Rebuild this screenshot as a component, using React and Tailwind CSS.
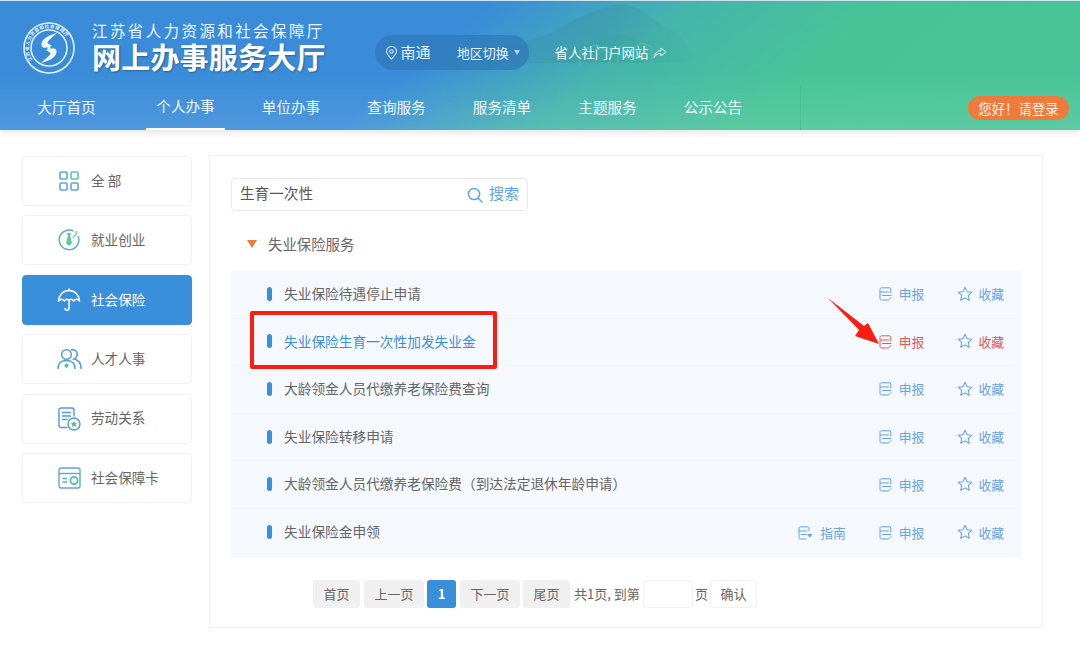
import React from "react";

const FONT = "font-['Noto_Sans_CJK_SC','Liberation_Sans',sans-serif]";

function Logo() {
  return (
    <svg width="52" height="52" viewBox="0 0 52 52" fill="none" className="ml-px shrink-0">
      <circle cx="26" cy="26" r="25" stroke="#dff0fa" strokeWidth="1.6" />
      <circle cx="26" cy="26" r="18" stroke="#dff0fa" strokeWidth="1.6" />
      <defs>
        <path id="ring" d="M9.5 38 A20.3 20.3 0 1 1 42.5 38" />
      </defs>
      <text fontSize="4.4" fill="#e6f3fb" fontWeight="700" letterSpacing="0.6" fontFamily="Noto Sans CJK SC, sans-serif">
        <textPath href="#ring">江苏省人力资源和社会保障厅</textPath>
      </text>
      <path d="M34 11 C27 13 18 16 18.5 23 C19 27 24 26 29 24 L24.5 21 C24 19 30 15 34 11Z" fill="#eef7fc" />
      <path d="M18 41 C25 39 34 36 33.5 29 C33 25 28 26 23 28 L27.5 31 C28 33 22 37 18 41Z" fill="#eef7fc" />
      <circle cx="26" cy="26" r="1.6" fill="#eef7fc" />
    </svg>
  );
}

function Mountains() {
  return (
    <svg className="absolute left-[430px] top-0 h-[70px] w-[270px] opacity-25 [mask-image:linear-gradient(90deg,transparent_0%,black_35%,black_70%,transparent_100%)]" viewBox="0 0 270 70" fill="none">
      <path d="M0 62 C40 44 90 48 125 30 C145 18 175 3 195 3 C212 5 222 22 245 30 C255 40 262 50 270 62Z" fill="#3a8a9e" />
      <path d="M110 62 C140 42 165 44 190 32 C215 40 240 52 260 62Z" fill="#2f8a8a" />
      <path d="M150 64 V50 L166 44 L180 52 V64 M188 62 V46 H204 L212 42 L222 46 V62" stroke="#8fd0c4" strokeWidth="1.2" />
    </svg>
  );
}

const GridIcon = () => (
  <svg width="20" height="20" viewBox="0 0 20 20" fill="none" strokeWidth="1.6">
    <rect x="1" y="1" width="7" height="7" rx="1" stroke="#5da5e3" />
    <rect x="12" y="1" width="7" height="7" rx="1" stroke="#5cc9a2" />
    <rect x="1" y="12" width="7" height="7" rx="1" stroke="#5da5e3" />
    <rect x="12" y="12" width="7" height="7" rx="1" stroke="#5da5e3" />
  </svg>
);

const JobIcon = () => (
  <svg width="22" height="22" viewBox="0 0 22 22" fill="none">
    <path d="M15.5 2.2 A9.8 9.8 0 1 0 20 7" stroke="#5da5e3" strokeWidth="1.4" />
    <path d="M9 4 H13 L12.2 7 L14 14 L11 17 L8 14 L9.8 7Z" fill="#5cc9a2" />
    <path d="M15 9 L19 4 M17 3 L20 3" stroke="#5cc9a2" strokeWidth="1.2" />
  </svg>
);

const UmbrellaIcon = () => (
  <svg width="24" height="24" viewBox="0 0 24 24" fill="none" stroke="#ffffff" strokeWidth="1.5" strokeLinecap="round" strokeLinejoin="round">
    <path d="M1.5 13 C2 7 6 2.5 12 2.5 C18 2.5 22 7 22.5 13 C20.5 10.6 18.5 10.6 16.7 13 C15 10.6 13.5 10.6 12 12.5 C10.5 10.6 9 10.6 7.3 13 C5.5 10.6 3.5 10.6 1.5 13Z" />
    <path d="M12 12.5 V20 C12 23 8.5 23 8 20.5" />
    <path d="M12 1 V2.5" />
  </svg>
);

const PeopleIcon = () => (
  <svg width="25" height="22" viewBox="0 0 25 22" fill="none" stroke="#4d9de0" strokeWidth="1.5" strokeLinecap="round">
    <circle cx="9.5" cy="6.5" r="4.8" />
    <path d="M1 20.5 C1 15 5 12.5 9.5 12.5 C14 12.5 18 15 18 20.5" />
    <path d="M14.5 2 C18 1 20.5 3.5 20.3 6.3 C20.2 8.3 19 10 17 11 C21 11.8 24 15 24 20.5" />
    <path d="M9.5 15 L11.8 17.6 L9.5 20.5 L7.2 17.6Z" fill="#49c497" stroke="none" />
  </svg>
);

const LaborIcon = () => (
  <svg width="23" height="24" viewBox="0 0 23 24" fill="none" stroke="#4d9de0" strokeWidth="1.4" strokeLinecap="round">
    <path d="M9 20.5 H3 C1.8 20.5 1 19.7 1 18.5 V3 C1 1.8 1.8 1 3 1 H14 C15.2 1 16 1.8 16 3 V9" />
    <path d="M4.5 5.5 H12.5 M4.5 9 H12.5 M4.5 12.5 H9" />
    <circle cx="16" cy="17" r="6" />
    <path d="M16 13.8 L17 16 L19.2 16.2 L17.6 17.8 L18 20 L16 18.9 L14 20 L14.4 17.8 L12.8 16.2 L15 16Z" fill="#49c497" stroke="none" />
  </svg>
);

const CardIcon = () => (
  <svg width="23" height="22" viewBox="0 0 23 22" fill="none" stroke="#5da5e3" strokeWidth="1.4">
    <rect x="1" y="1" width="21" height="20" rx="2" />
    <path d="M1 6.5 H22" />
    <path d="M4.5 11.5 H9 M4.5 15 H9" />
    <circle cx="16" cy="13.5" r="3.6" stroke="#49c497" strokeWidth="1.8" />
  </svg>
);

const FormIcon = ({ color = "#5da5e3" }) => (
  <svg width="13" height="15" viewBox="0 0 13 15" fill="none" stroke={color} strokeWidth="1" strokeLinecap="round" strokeLinejoin="round">
    <path d="M11.8 7 V3.2 C11.8 2.4 11.2 1.8 10.4 1.8 H2.5 C1.6 1.8 1 2.4 1 3.2 V12.5 C1 13.4 1.6 14 2.5 14 H9.5 L12 11.5" />
    <path d="M1.5 6 H9.5 M3.5 9.5 H12" />
  </svg>
);

const GuideIcon = () => (
  <svg width="15" height="15" viewBox="0 0 15 15" fill="none" stroke="#5da5e3" strokeWidth="1" strokeLinecap="round">
    <path d="M11 6 V3.2 C11 2.4 10.4 1.8 9.5 1.8 H2.5 C1.6 1.8 1 2.4 1 3.2 V12.5 C1 13.4 1.6 14 2.5 14 H8" />
    <path d="M1.5 6 H8.5 M3.5 9.5 H8" />
    <path d="M9 9 H14.5 L11.8 12.8Z" fill="#5da5e3" stroke="none" />
  </svg>
);

const StarIcon = () => (
  <svg width="16" height="16" viewBox="0 0 15 15" fill="none" stroke="#5da5e3" strokeWidth="0.95" strokeLinejoin="round">
    <path d="M7.5 1.2 L9.4 5.3 L13.9 5.8 L10.6 8.8 L11.5 13.3 L7.5 11.1 L3.5 13.3 L4.4 8.8 L1.1 5.8 L5.6 5.3Z" />
  </svg>
);

const side = [
  { label: "全 部", icon: <GridIcon /> },
  { label: "就业创业", icon: <JobIcon /> },
  { label: "社会保险", icon: <UmbrellaIcon />, active: true },
  { label: "人才人事", icon: <PeopleIcon /> },
  { label: "劳动关系", icon: <LaborIcon /> },
  { label: "社会保障卡", icon: <CardIcon /> },
];

const rows = [
  { t: "失业保险待遇停止申请" },
  { t: "失业保险生育一次性加发失业金", hot: true },
  { t: "大龄领金人员代缴养老保险费查询" },
  { t: "失业保险转移申请" },
  { t: "大龄领金人员代缴养老保险费（到达法定退休年龄申请）" },
  { t: "失业保险金申领", guide: true },
];

const nav = ["个人办事", "单位办事", "查询服务", "服务清单", "主题服务", "公示公告"];

function PageBtn({ children, className }) {
  return (
    <span className={"flex h-[28px] items-center justify-center rounded-[3px] bg-[#f0f0f0] text-[13px] text-[#666666] " + className}>
      {children}
    </span>
  );
}

export default function App() {
  return (
    <div className={"relative h-[646px] w-[1080px] overflow-hidden bg-white " + FONT}>
      <header className="relative h-[130px] border-t border-[#cfe3f3] bg-[linear-gradient(141deg,#3a8cd9_0%,#3a8cd9_40%,#45b5ac_56%,#47c497_72%,#49c497_100%)] shadow-[0_2px_8px_rgba(0,0,0,0.12)]">
        <div className="absolute inset-0 bg-[linear-gradient(180deg,rgba(255,255,255,0)_55%,rgba(255,255,255,0.1)_100%)]" />
        <Mountains />
        <div className="relative flex h-[84px] items-center pl-[22px] pt-[10px]">
          <Logo />
          <div className="mb-[7px] ml-[17px] flex flex-col text-white">
            <span className="text-[15.5px] leading-[22px] tracking-[2.4px] text-[#e8f3fb]">江苏省人力资源和社会保障厅</span>
            <span className="text-[29px] font-bold leading-[30px] tracking-[0.2px] [text-shadow:1px_1px_2px_rgba(0,0,0,0.3)]">网上办事服务大厅</span>
          </div>
          <div className="ml-[49px] mt-[9px] flex h-[35px] w-[154px] items-center rounded-full bg-[#2f78b8]/70 pl-[10px] text-[#e6f1f9]">
            <svg width="13" height="14" viewBox="0 0 13 14" fill="none" stroke="#cfe3f3" strokeWidth="1.1">
              <path d="M6.5 13 C3.5 10 1.5 8 1.5 5.5 A5 5 0 0 1 11.5 5.5 C11.5 8 9.5 10 6.5 13Z" />
              <circle cx="6.5" cy="5.5" r="1.7" />
            </svg>
            <span className="ml-[3px] text-[15px]">南通</span>
            <span className="ml-[26px] text-[13px]">地区切换</span>
            <span className="ml-[5px] h-0 w-0 border-x-[3px] border-t-[5px] border-x-transparent border-t-[#b5d2e8]" />
          </div>
          <span className="ml-[26px] mt-[9px] text-[13.4px] text-[#f0f8fc]">省人社门户网站</span>
          <svg width="14" height="12" viewBox="0 0 14 12" fill="none" stroke="#eaf5f8" strokeWidth="1" className="ml-[5px] mt-[9px]" strokeLinejoin="round">
            <path d="M8 1 L13 5 L8 9 V6.6 C5 6.4 3 7.6 1 10.5 C1.5 6.5 4 3.8 8 3.4Z" />
          </svg>
        </div>
        <nav className="relative flex h-[45px] items-center pl-[27px] text-[14.6px] text-[#eef7fb]">
          <span className="mr-[40px] flex h-full w-[79px] items-center justify-center pb-[2px]">大厅首页</span>
          {nav.map((n, i) => (
            <span
              key={n}
              className={
                "mr-[26.5px] flex h-full w-[79px] items-center justify-center pb-[2px] " +
                (i === 0 ? "border-b-2 border-white" : "")
              }
            >
              {n}
            </span>
          ))}
          <span className="absolute left-[800px] top-0 h-full w-px bg-[#3fae8f]/40" />
          <span className="absolute left-[968px] top-[11px] flex h-[24px] w-[101px] items-center justify-center rounded-full bg-[#ee7b3c] text-[13.4px] text-[#fff3ea]">
            您好！请登录
          </span>
        </nav>
      </header>

      <main className="flex items-start pl-[22px] pt-[25px]">
        <aside className="flex w-[170px] flex-col gap-[9.4px] pt-[1px]">
          {side.map((s) => (
            <div
              key={s.label}
              className={
                "flex h-[50px] items-center rounded-[4px] border " +
                (s.active
                  ? "border-[#3a8fdb] bg-[#3a8fdb] text-white"
                  : "border-[#f2f2f2] bg-white text-[#666666]")
              }
            >
              <span className="ml-[32px] flex w-[28px] shrink-0 items-center justify-center">{s.icon}</span>
              <span className="ml-[8px] pb-[2px] text-[13.6px]">{s.label}</span>
            </div>
          ))}
        </aside>

        <section className="ml-[17px] h-[473px] w-[834px] border border-[#f0f0f0] bg-white pl-[21px] pr-[21px] pt-[22px]">
          <div className="flex h-[33px] w-[297px] items-center justify-between rounded-[4px] border border-[#e9e9e9] pl-[8px] pr-[8px]">
            <span className="pb-[3px] text-[14.6px] text-[#555555]">生育一次性</span>
            <span className="flex items-center gap-[6px] text-[15px] text-[#5da5e3]">
              <svg width="16" height="16" viewBox="0 0 16 16" fill="none" stroke="#5da5e3" strokeWidth="1.5" strokeLinecap="round">
                <circle cx="7" cy="7" r="5.6" />
                <path d="M11.2 11.2 L15 15" />
              </svg>
              <span className="pb-[2px]">搜索</span>
            </span>
          </div>

          <div className="flex h-[60px] items-center pl-[16px] pt-[6px] text-[14.4px] text-[#666666]">
            <span className="h-0 w-0 border-x-[5px] border-t-[8px] border-x-transparent border-t-[#ee7b3c]" />
            <span className="ml-[11px]">失业保险服务</span>
          </div>

          <ul className="flex h-[287px] w-[790px] flex-col bg-[#f5f8fd]">
            {rows.map((r) => (
              <li key={r.t} className="flex h-[47.6px] shrink-0 items-center border-b border-[#f2f5fa] pb-[1px] pl-[36px] pr-[17px] last:border-b-0">
                <span className="h-[14px] w-[5px] rounded-full bg-[#3a8fdb]" />
                <span className={"ml-[12px] pb-[1px] text-[13.7px] " + (r.hot ? "text-[#3a8fdb]" : "text-[#666666]")}>{r.t}</span>
                <span className="ml-auto flex items-center text-[12.8px]">
                  {r.guide && (
                    <span className="mr-[33px] flex items-center gap-[7px] text-[#6aa6dc]">
                      <GuideIcon />
                      指南
                    </span>
                  )}
                  <span className={"flex items-center gap-[7px] " + (r.hot ? "text-[#e05a5a]" : "text-[#6aa6dc]")}>
                    <FormIcon color={r.hot ? "#e05a5a" : "#5da5e3"} />
                    申报
                  </span>
                  <span className={"ml-[33px] flex items-center gap-[5px] " + (r.hot ? "text-[#e05a5a]" : "text-[#6aa6dc]")}>
                    <StarIcon />
                    收藏
                  </span>
                </span>
              </li>
            ))}
          </ul>

          <div className="mt-[22px] flex items-center pl-[82px] text-[13px] text-[#666666]">
            <PageBtn className="w-[47px]">首页</PageBtn>
            <PageBtn className="ml-[4px] w-[60px]">上一页</PageBtn>
            <span className="ml-[3px] flex h-[28px] w-[29px] items-center justify-center rounded-[3px] bg-[#3a8fdb] text-[13px] font-bold text-white">1</span>
            <PageBtn className="ml-[4px] w-[60px]">下一页</PageBtn>
            <PageBtn className="ml-[3px] w-[47px]">尾页</PageBtn>
            <span className="ml-[4px] w-[69px] whitespace-nowrap">共1页, 到第</span>
            <span className="h-[28px] w-[50px] rounded-[3px] border border-[#f2f2f2]" />
            <span className="ml-[2px] w-[15px]">页</span>
            <span className="flex h-[28px] w-[47px] items-center justify-center rounded-[3px] border border-[#f2f2f2]">确认</span>
          </div>
        </section>
      </main>

      <div className="absolute left-[250px] top-[311px] h-[58px] w-[247px] rounded-[2px] border-[4px] border-[#fb1c12]" />
      <svg className="absolute left-[825px] top-[295px]" width="56" height="56" viewBox="0 0 56 56">
        <path d="M3 3 L39 31 L43 28 L54 49 L30 41 L34 35Z" fill="#fb1c12" />
      </svg>
    </div>
  );
}
